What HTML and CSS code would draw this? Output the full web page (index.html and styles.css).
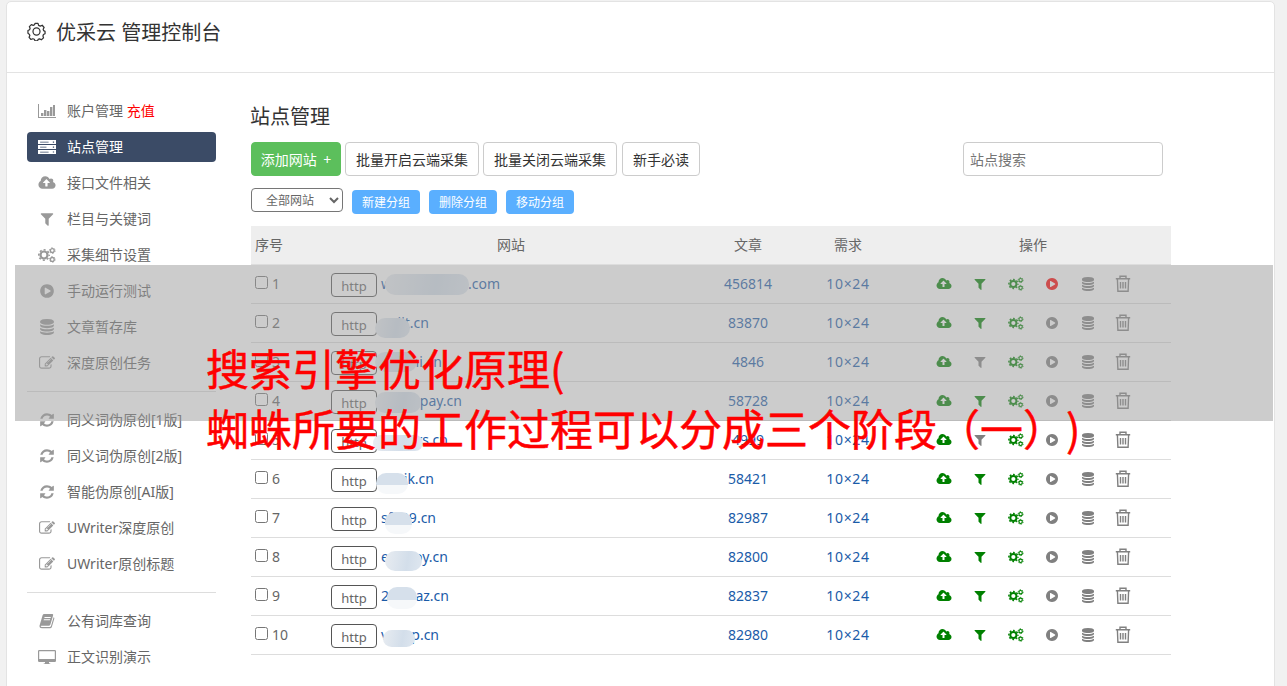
FILE: index.html
```
<!DOCTYPE html>
<html lang="zh-CN">
<head>
<meta charset="UTF-8">
<meta name="viewport" content="width=device-width, initial-scale=1.0">
<title>优采云 管理控制台</title>
<link rel="stylesheet" href="styles.css">
</head>
<body>
<svg class="sprite">
    <symbol id="gear" viewBox="0 0 20 20"><path d="M8.4 1.5h3.2l.6 2 1.8.8 2-.9 2 2.4-1 1.9.5 1.4 1.5.8v2.4l-1.7.9-.5 1.5.6 2-2.3 2-1.9-.9-1.5.5-.6 1.6H8.5l-.8-1.7-1.5-.6-2 .8-2-2.3.8-1.8-.6-1.5L1 11.9V9l1.7-.8.6-1.6-.8-1.7 2.1-2.1 2 .7 1.3-.6z" fill="none" stroke="currentColor" stroke-width="1.3" stroke-linejoin="round"/><circle cx="10" cy="10" r="3.7" fill="none" stroke="currentColor" stroke-width="1.3"/></symbol>
    <symbol id="chart" viewBox="0 0 18 16"><path d="M0 1h1v13h17v1H0zM3 10h2.400v3H3zM6 7h2.400v6H6zM9 8h2.400v5H9zM12 4h2.400v9H12zM15 2h2v11h-2z"/></symbol>
    <symbol id="server" viewBox="0 0 17 14"><path fill-rule="evenodd" d="M0 .5h17v3.700H0zM0 5.200h17v3.700H0zM0 9.900h17v3.700H0zM2 2h8v.7H2zM2 6.700h6v.7H2zM2 11.400h8v.7H2zM14 1.800h1.200v1.100H14zM14 6.500h1.200v1.100H14zM14 11.200h1.200v1.100H14z"/></symbol>
    <symbol id="cloud" viewBox="-64 0 1920 1792"><path d="M1216 864q0-14-9-23l-352-352q-9-9-23-9t-23 9l-351 351q-10 12-10 24 0 14 9 23t23 9h224v352q0 13 9.500 22.500t22.500 9.500h192q13 0 22.500-9.500t9.500-22.500v-352h224q13 0 22.500-9.500t9.500-22.500zm640 288q0 159-112.500 271.500t-271.500 112.500h-1088q-185 0-316.500-131.500t-131.500-316.500q0-130 70-240t188-165q-2-30-2-43 0-212 150-362t362-150q156 0 285.500 87t188.500 231q71-62 166-62 106 0 181 75t75 181q0 76-41 138 130 31 213.500 135.500t83.500 238.500z"/></symbol>
    <symbol id="filter" viewBox="0 0 1792 1792"><path d="M1595 295q17 41-14 70l-493 493v742q0 42-39 59-13 5-25 5-27 0-45-19l-256-256q-19-19-19-45v-486l-493-493q-31-29-14-70 17-39 59-39h1280q42 0 59 39z"/></symbol>
    <symbol id="cogs" viewBox="0 0 18 16"><g fill="none" stroke="currentColor"><circle cx="6" cy="8" r="3.500" stroke-width="2.200"/><circle cx="6" cy="8" r="5.200" stroke-width="1.600" stroke-dasharray="2.040 2.044" stroke-dashoffset="1.020"/><circle cx="14.300" cy="3.600" r="1.900" stroke-width="1.300"/><circle cx="14.300" cy="3.600" r="2.800" stroke-width="1" stroke-dasharray="1.460 1.472"/><circle cx="14.300" cy="12.400" r="1.900" stroke-width="1.300"/><circle cx="14.300" cy="12.400" r="2.800" stroke-width="1" stroke-dasharray="1.460 1.472"/></g></symbol>
    <symbol id="play" viewBox="0 0 1792 1792"><path d="M896 128q209 0 385.500 103t279.500 279.500 103 385.500-103 385.500-279.500 279.500-385.500 103-385.500-103-279.500-279.500-103-385.500 103-385.500 279.500-279.500 385.500-103zm384 823q32-18 32-55t-32-55l-544-320q-31-19-64-1-32 19-32 56v640q0 37 32 56 16 8 32 8 17 0 32-9z"/></symbol>
    <symbol id="database" viewBox="0 0 1792 1792"><path d="M896 768q237 0 443-43t325-127v170q0 69-103 128t-280 93.500-385 34.500-385-34.500-280-93.500-103-128v-170q119 84 325 127t443 43zm0 768q237 0 443-43t325-127v170q0 69-103 128t-280 93.500-385 34.500-385-34.500-280-93.500-103-128v-170q119 84 325 127t443 43zm0-384q237 0 443-43t325-127v170q0 69-103 128t-280 93.500-385 34.500-385-34.500-280-93.500-103-128v-170q119 84 325 127t443 43zm0-1152q208 0 385 34.500t280 93.500 103 128v128q0 69-103 128t-280 93.500-385 34.500-385-34.500-280-93.500-103-128v-128q0-69 103-128t280-93.500 385-34.500z"/></symbol>
    <symbol id="edit" viewBox="0 0 1792 1792"><path d="M888 1184l116-116-152-152-116 116v56h96v96h56zm440-720q-16-16-33 1l-350 350q-17 17-1 33t33-1l350-350q17-17 1-33zm80 594v190q0 119-84.500 203.500t-203.500 84.500h-832q-119 0-203.500-84.500t-84.500-203.500v-832q0-119 84.500-203.500t203.500-84.500h832q63 0 117 25 15 7 18 23 3 17-9 29l-49 49q-14 14-32 8-23-6-45-6h-832q-66 0-113 47t-47 113v832q0 66 47 113t113 47h832q66 0 113-47t47-113v-126q0-13 9-22l64-64q15-15 35-7t20 29zm-96-738l288 288-672 672h-288v-288zm444 132l-92 92-288-288 92-92q28-28 68-28t68 28l152 152q28 28 28 68t-28 68z"/></symbol>
    <symbol id="refresh" viewBox="0 0 1792 1792"><path d="M1639 1056q0 5-1 7-64 268-268 434.500t-478 166.500q-146 0-282.500-55t-243.500-157l-129 129q-19 19-45 19t-45-19-19-45v-448q0-26 19-45t45-19h448q26 0 45 19t19 45-19 45l-137 137q71 66 161 102t187 36q134 0 250-65t186-179q11-17 53-117 8-23 30-23h192q13 0 22.500 9.500t9.500 22.500zm25-800v448q0 26-19 45t-45 19h-448q-26 0-45-19t-19-45 19-45l138-138q-148-137-349-137-134 0-250 65t-186 179q-11 17-53 117-8 23-30 23h-199q-13 0-22.500-9.500t-9.500-22.500v-7q65-268 270-434.500t480-166.500q146 0 284 55.500t245 156.500l130-129q19-19 45-19t45 19 19 45z"/></symbol>
    <symbol id="book" viewBox="0 0 16 16"><path fill-rule="evenodd" d="M5.300 1h7.900q1.300 0 .9 1.400l-2.700 9Q11 12.700 9.600 12.700H2.400q-.8 0-.7.600.2.700 1.100.7h7.900q1 0 1.300-1l2.600-8.700q1 .4.700 1.500l-2.500 8.100Q12.400 15.300 11 15.300H3Q.3 15.300.5 12.800L3.600 2.200Q4 1 5.300 1zM5.600 4l-.3.900h6.300l.3-.9zM4.900 6.300l-.3.900h6.300l.3-.9z"/></symbol>
    <symbol id="desktop" viewBox="0 0 18 16"><path fill-rule="evenodd" d="M1.200 1h15.600q1.200 0 1.200 1.200v9.600q0 1.200-1.200 1.200H11v1.200q1.500.2 1.500.8H5.500q0-.6 1.500-.8V13H1.200Q0 13 0 11.800V2.200Q0 1 1.200 1zM1.200 2.200v7.800h15.600V2.200z"/></symbol>
    <symbol id="trash" viewBox="0 0 16 18"><path d="M.8 3.700h14.400M5 3.500V1.300h6v2.200M2.400 4l.5 12.300h10.200L13.600 4M5.500 7v6.500M8 7v6.500M10.500 7v6.500" fill="none" stroke="currentColor" stroke-width="1.400"/></symbol>
</svg>

<div class="panel">
    <header>
        <svg class="logo"><use href="#gear"/></svg>
        <h1>优采云 管理控制台</h1>
    </header>
    <div class="content">
        <nav>
            <a><svg><use href="#chart"/></svg>账户管理 <em>充值</em></a>
            <a class="active"><svg><use href="#server"/></svg>站点管理</a>
            <a><svg><use href="#cloud"/></svg>接口文件相关</a>
            <a><svg><use href="#filter"/></svg>栏目与关键词</a>
            <a><svg><use href="#cogs"/></svg>采集细节设置</a>
            <a><svg><use href="#play"/></svg>手动运行测试</a>
            <a><svg><use href="#database"/></svg>文章暂存库</a>
            <a><svg><use href="#edit"/></svg>深度原创任务</a>
            <hr>
            <a><svg><use href="#refresh"/></svg>同义词伪原创[1版]</a>
            <a><svg><use href="#refresh"/></svg>同义词伪原创[2版]</a>
            <a><svg><use href="#refresh"/></svg>智能伪原创[AI版]</a>
            <a><svg><use href="#edit"/></svg>UWriter深度原创</a>
            <a><svg><use href="#edit"/></svg>UWriter原创标题</a>
            <hr>
            <a><svg><use href="#book"/></svg>公有词库查询</a>
            <a><svg><use href="#desktop"/></svg>正文识别演示</a>
        </nav>
        <main>
            <h2>站点管理</h2>
            <div class="toolbar">
                <button class="btn add">添加网站 +</button>
                <button class="btn">批量开启云端采集</button>
                <button class="btn">批量关闭云端采集</button>
                <button class="btn help">新手必读</button>
                <input class="search" type="text" placeholder="站点搜索">
            </div>
            <div class="groups">
                <div class="select">全部网站<svg viewBox="0 0 10 7"><path d="M1 1l4 4 4-4" fill="none" stroke="currentColor" stroke-width="2"/></svg></div>
                <button>新建分组</button>
                <button>删除分组</button>
                <button>移动分组</button>
            </div>
            <div class="row head">
                <span class="no">序号</span>
                <span>网站</span>
                <span>文章</span>
                <span>需求</span>
                <span>操作</span>
            </div>
            <div id="list"></div>
        </main>
    </div>
</div>
<div class="banner">
    <p>搜索引擎优化原理(</p>
    <p>蜘蛛所要的工作过程可以分成三个阶段<span lang="zh-TW">（一）</span>)</p>
</div>
<script>
(function(){
    // head: 域名开头, tail: 域名结尾, end: 结尾的右边界, mask: [left, top, width, height]
    let sites = [
        {head: "w", tail: ".com", end: 173, num: 456814, mask: [58, 9, 84, 21]},
        {head: "", tail: "jit.cn", end: 102, num: 83870, mask: [48, 14, 35, 20]},
        {head: "", tail: "ni.cn", end: 115, num: 4846, mask: [48, 9, 42, 20]},
        {head: "", tail: "pay.cn", end: 135, num: 58728, mask: [48, 10, 46, 21]},
        {head: "", tail: "rs.cn", end: 121, num: 4999, mask: [46, 14, 50, 16]},
        {head: "", tail: "ik.cn", end: 107, num: 58421, mask: [49, 13, 32, 21], half: true},
        {head: "sft", tail: "39.cn", end: 109, num: 82987, mask: [58, 13, 27, 22], half: true},
        {head: "e", tail: "oy.cn", end: 121, num: 82800, mask: [58, 13, 37, 20]},
        {head: "2", tail: "az.cn", end: 122, num: 82837, mask: [60, 10, 30, 22], half: true},
        {head: "v", tail: "p.cn", end: 112, num: 82980, mask: [56, 14, 32, 17]}
    ];
    let inner = "";
    sites.forEach(function(s, i){
        let [x, y, w, h] = s.mask;
        let filter = i == 2 || i == 4 ? "gray" : "green";
        let play = i == 0 ? "red" : "gray";
        inner += `<div class="row">
            <span class="no"><input type="checkbox">${i + 1}</span>
            <span class="site"><button>http</button>
                <a class="name" style="width:${s.end - 54}px"><b>${s.head}</b><b>${s.tail}</b></a>
                <i class="mask${s.half ? " half" : ""}" style="left:${x}px;top:${y}px;width:${w}px;height:${h}px"></i>
            </span>
            <span class="num">${s.num}</span>
            <span class="num need">10×24</span>
            <span class="ops">
                <svg class="green"><use href="#cloud"/></svg>
                <svg class="${filter}"><use href="#filter"/></svg>
                <svg class="green"><use href="#cogs"/></svg>
                <svg class="${play}"><use href="#play"/></svg>
                <svg class="gray"><use href="#database"/></svg>
                <svg class="gray trash"><use href="#trash"/></svg>
            </span>
        </div>`;
    });
    document.querySelector("#list").innerHTML = inner;
})();
</script>
</body>
</html>
```
FILE: styles.css
```
* {
    box-sizing: border-box;
}
body {
    margin: 0;
    height: 686px;
    overflow: hidden;
    position: relative;
    background: #f1f1f1;
    color: #666;
    font: 14px/20px "Noto Sans", "Noto Sans CJK SC", sans-serif;
}
svg {
    fill: currentColor;
}
.sprite {
    display: none;
}
button, input {
    font-family: inherit;
}
.panel {
    width: 1269px;
    height: 700px;
    margin: 1px 0 0 6px;
    background: #fff;
    border: 1px solid #e3e3e3;
    border-radius: 5px;
}
header {
    display: flex;
    height: 71px;
    padding: 16px 0 0 20px;
    border-bottom: 1px solid #e3e3e3;
    color: #333;
}
.logo {
    width: 19px;
    height: 19px;
    margin: 4px 10px 0 0;
}
h1, h2 {
    margin: 0;
    font-size: 20px;
    line-height: 30px;
    font-weight: normal;
    color: #333;
}
.content {
    display: flex;
    padding: 23px 0 0 20px;
}
nav {
    width: 189px;
    margin-right: 35px;
}
nav a {
    display: flex;
    align-items: center;
    height: 30px;
    margin-bottom: 6px;
    padding-left: 11px;
    border-radius: 4px;
    white-space: pre;
}
nav svg {
    width: 18px;
    height: 16px;
    margin-right: 11px;
    color: #999;
}
nav em {
    font-style: normal;
    color: #f00;
}
nav .active, nav .active svg {
    color: #fff;
}
nav .active {
    background: #3b4b66;
}
nav hr {
    height: 1px;
    margin: 13px 0;
    border: 0;
    background: #ddd;
}
main {
    width: 920px;
}
h2 {
    margin: 6px 0 0 -1px;
}
.toolbar {
    display: flex;
    gap: 4px;
    margin-top: 10px;
}
.btn {
    height: 34px;
    padding: 0 10px;
    border: 1px solid #ccc;
    border-radius: 4px;
    background: #fff;
    color: #333;
    font-size: 14px;
}
.help {
    margin-left: 1px;
}
.add {
    width: 90px;
    padding: 0;
    border-color: #5cbf5c;
    background: #5cbf5c;
    color: #fff;
    word-spacing: 3px;
}
.search {
    width: 200px;
    height: 34px;
    margin: 0 8px 0 auto;
    padding: 0 6px;
    border: 1px solid #ccc;
    border-radius: 4px;
    font-size: 14px;
}
.search::placeholder {
    color: #757575;
}
.groups {
    display: flex;
    gap: 9px;
    margin: 12px 0;
}
.select {
    display: flex;
    align-items: center;
    width: 92px;
    height: 24px;
    padding: 1px 0 0 14px;
    border: 1px solid #767676;
    border-radius: 4px;
    font-size: 12px;
}
.select svg {
    width: 10px;
    height: 7px;
    margin-left: 15px;
}
.groups button {
    width: 68px;
    height: 24px;
    margin-top: 2px;
    padding: 0;
    border: 0;
    border-radius: 4px;
    background: #5aafff;
    color: #fff;
    font-size: 12px;
}
.row {
    display: grid;
    grid-template-columns: 76px 368px 106px 94px 276px;
    height: 39px;
    line-height: 38px;
    border-bottom: 1px solid #ddd;
    text-align: center;
}
.head {
    background: #eee;
}
.no {
    padding-left: 4px;
    text-align: left;
}
.no input {
    width: 13px;
    height: 13px;
    margin: 0 4px 0 0;
}
.site {
    position: relative;
    display: flex;
}
.site button {
    width: 46px;
    height: 24px;
    margin: 8px 4px 0;
    padding: 2px 0 0;
    border: 1px solid #555;
    border-radius: 4px;
    background: none;
    color: #666;
    font-size: 13px;
}
.name {
    display: flex;
    justify-content: space-between;
    white-space: nowrap;
}
.name b {
    font-weight: normal;
}
.name, .num {
    color: #1a5ba8;
}
.need {
    letter-spacing: .7px;
}
/* 遮住域名的一部分 */
.mask {
    position: absolute;
    border-radius: 10px;
    background: linear-gradient(100deg, #e8ecf1, #d3deea 60%, #dfe7f0);
}
.half {
    background: linear-gradient(#d6e0eb 58%, #f6f8fa 58%);
}
.ops {
    display: flex;
    align-items: center;
    justify-content: center;
    gap: 20px;
}
.ops svg {
    width: 16px;
    height: 14px;
}
.ops .trash {
    width: 16px;
    height: 18px;
    margin-left: -1px;
}
.green {
    color: #008000;
}
.gray {
    color: #808080;
}
.red {
    color: #f00;
}
.banner {
    position: absolute;
    left: 15px;
    top: 265px;
    width: 1258px;
    height: 156px;
    padding: 72px 0 0 191px;
    background: rgba(153, 153, 153, .5);
    color: #f00;
    font: 43px/60px "Noto Sans CJK SC", sans-serif;
    font-kerning: none;
    text-spacing-trim: space-all;
    white-space: nowrap;
    -webkit-text-stroke: .5px #f00;
}
.banner p {
    height: 60px;
    margin: 0;
}
.banner span {
    font-family: "Noto Sans CJK TC", sans-serif;
}
```
